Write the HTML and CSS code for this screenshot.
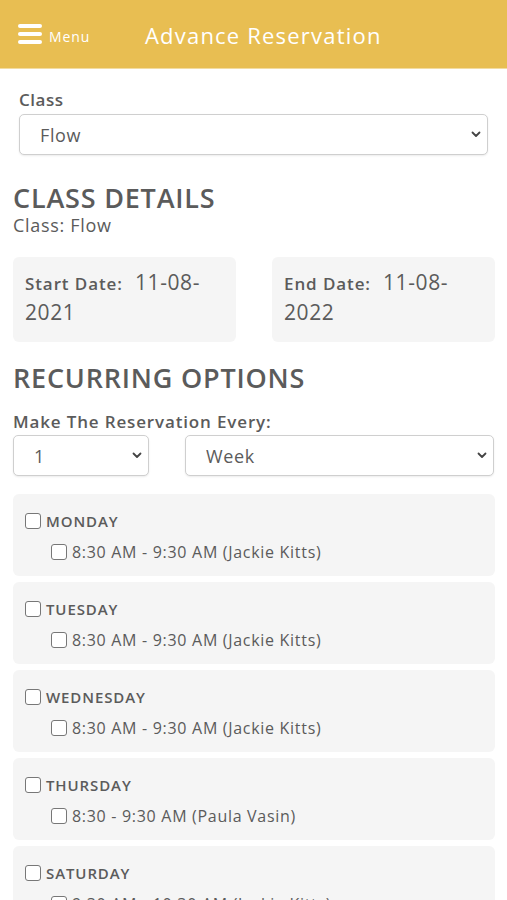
FILE: index.html
```html
<!DOCTYPE html>
<html>
<head>
    <meta charset="UTF-8">
    <title>Advance Reservation</title>
    <link rel="stylesheet" href="styles.css">
</head>
<body>
    <header class="topbar">
        <a class="menu-btn">
            <svg class="burger" width="24" height="20" viewBox="0 0 24 20">
                <rect x="0" y="0" width="24" height="4" rx="2" fill="#fff"/>
                <rect x="0" y="8" width="24" height="4" rx="2" fill="#fff"/>
                <rect x="0" y="16" width="24" height="4" rx="2" fill="#fff"/>
            </svg>
            <span>Menu</span>
        </a>
        <h1 class="page-title">Advance Reservation</h1>
    </header>

    <main class="content">
        <div class="class-field">
            <label class="field-label">Class</label>
            <div class="select-wrap">
                <select class="select"><option>Flow</option></select>
                <svg class="chevron" width="10" height="7" viewBox="0 0 10 7"><path d="M1.5 1.5 L5 5 L8.5 1.5" fill="none" stroke="#444" stroke-width="1.8" stroke-linecap="round" stroke-linejoin="round"/></svg>
            </div>
        </div>

        <h2 class="section-title details-title">CLASS DETAILS</h2>
        <p class="class-name">Class: Flow</p>

        <div class="date-row">
            <div class="date-box"><b>Start Date:</b>&nbsp; <span class="date-val">11-08-<br>2021</span></div>
            <div class="date-box"><b>End Date:</b>&nbsp; <span class="date-val">11-08-<br>2022</span></div>
        </div>

        <h2 class="section-title">RECURRING OPTIONS</h2>
        <label class="field-label every-label">Make The Reservation Every:</label>
        <div class="every-row">
            <div class="select-wrap num-select">
                <select class="select"><option>1</option></select>
                <svg class="chevron" width="10" height="7" viewBox="0 0 10 7"><path d="M1.5 1.5 L5 5 L8.5 1.5" fill="none" stroke="#444" stroke-width="1.8" stroke-linecap="round" stroke-linejoin="round"/></svg>
            </div>
            <div class="select-wrap unit-select">
                <select class="select"><option>Week</option></select>
                <svg class="chevron" width="10" height="7" viewBox="0 0 10 7"><path d="M1.5 1.5 L5 5 L8.5 1.5" fill="none" stroke="#444" stroke-width="1.8" stroke-linecap="round" stroke-linejoin="round"/></svg>
            </div>
        </div>

        <div class="day-card">
            <label class="day-name"><span class="box"></span>MONDAY</label>
            <label class="slot"><span class="box"></span>8:30 AM - 9:30 AM (Jackie Kitts)</label>
        </div>
        <div class="day-card">
            <label class="day-name"><span class="box"></span>TUESDAY</label>
            <label class="slot"><span class="box"></span>8:30 AM - 9:30 AM (Jackie Kitts)</label>
        </div>
        <div class="day-card">
            <label class="day-name"><span class="box"></span>WEDNESDAY</label>
            <label class="slot"><span class="box"></span>8:30 AM - 9:30 AM (Jackie Kitts)</label>
        </div>
        <div class="day-card">
            <label class="day-name"><span class="box"></span>THURSDAY</label>
            <label class="slot"><span class="box"></span>8:30 - 9:30 AM (Paula Vasin)</label>
        </div>
        <div class="day-card">
            <label class="day-name"><span class="box"></span>SATURDAY</label>
            <label class="slot"><span class="box"></span>9:30 AM - 10:30 AM (Jackie Kitts)</label>
        </div>
    </main>
</body>
</html>
```

FILE: styles.css
```css
body {
    margin: 0;
    font-family: "Open Sans", "DejaVu Sans", sans-serif;
    color: #5b5b5b;
    background: #fff;
}

.topbar {
    height: 69px;
    background-color: #e8be52;
    border-bottom: 1px solid #f3dca0;
    display: flex;
    align-items: center;
    padding: 0 0 0 18px;
    box-sizing: border-box;
}

.menu-btn {
    display: flex;
    align-items: center;
    color: #fff;
    width: 127px;
}

.menu-btn span {
    font-size: 14px;
    letter-spacing: 0.9px;
    margin: 4px 0 0 7px;
}

.page-title {
    margin: 0 0 -1px;
    font-size: 22px;
    font-weight: 500;
    color: #fff;
    letter-spacing: 1.2px;
}

.content {
    padding: 20px 12px 0 13px;
}

.class-field {
    margin: 0 7px 0 6px;
}

.field-label {
    display: block;
    font-size: 17px;
    font-weight: 600;
    letter-spacing: 0.5px;
    line-height: 22px;
    margin-bottom: 3px;
}

.select-wrap {
    position: relative;
}

.select {
    appearance: none;
    -webkit-appearance: none;
    width: 100%;
    height: 41px;
    border: 1px solid #cfcfcf;
    border-radius: 5px;
    background: #fff;
    font-family: inherit;
    font-size: 18px;
    letter-spacing: 0.6px;
    color: #5b5b5b;
    padding: 0 20px;
    box-shadow: 0 1px 2px rgba(0, 0, 0, 0.08);
}

.chevron {
    position: absolute;
    right: 7px;
    top: 17px;
    pointer-events: none;
}

.section-title {
    margin: 0;
    font-size: 27px;
    font-weight: 600;
    line-height: 30px;
    letter-spacing: 0.8px;
}

.details-title {
    margin-top: 28px;
}

.class-name {
    margin: 0;
    font-size: 18px;
    letter-spacing: 0.7px;
    line-height: 24px;
}

.date-row {
    display: flex;
    justify-content: space-between;
    margin: 20px 0 21px;
}

.date-box {
    width: 223px;
    height: 85px;
    box-sizing: border-box;
    background: #f5f5f5;
    border-radius: 6px;
    padding: 11px 12px;
    font-size: 21px;
    letter-spacing: 0.6px;
    line-height: 29px;
}

.date-box b {
    font-size: 17px;
    font-weight: 600;
    letter-spacing: 0.9px;
}

.every-label {
    margin-top: 18px;
    margin-bottom: 2px;
    letter-spacing: 0.85px;
}

.every-row {
    display: flex;
    justify-content: space-between;
    margin: 0 1px 18px 0;
}

.num-select {
    width: 136px;
}

.unit-select {
    width: 309px;
}

.day-card {
    background: #f5f5f5;
    border-radius: 6px;
    height: 82px;
    box-sizing: border-box;
    padding: 16px 12px;
    margin-bottom: 6px;
}

.day-name,
.slot {
    display: flex;
    align-items: center;
    line-height: 22px;
}

.day-name {
    font-size: 15px;
    font-weight: 600;
    letter-spacing: 0.9px;
}

.slot {
    font-size: 16px;
    letter-spacing: 0.7px;
    margin: 9px 0 0 26px;
}

.box {
    width: 14px;
    height: 14px;
    border: 1px solid #777;
    border-radius: 3px;
    background: #fff;
    margin-right: 5px;
    flex-shrink: 0;
}
```
